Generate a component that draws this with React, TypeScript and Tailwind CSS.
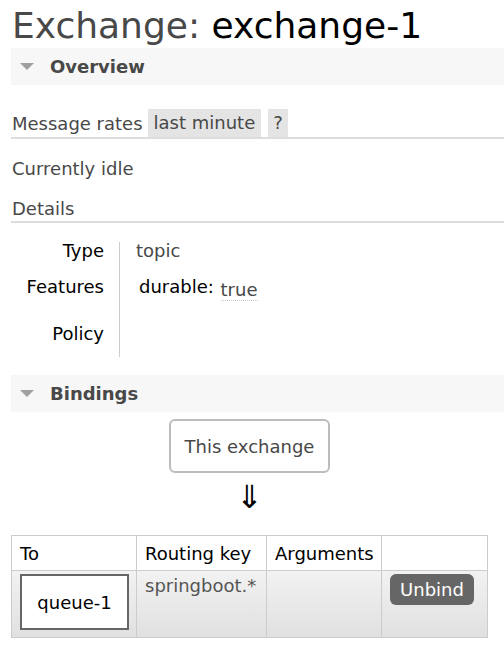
import React from 'react';

const SectionBar = ({ title }: { title: string }) => (
  <div className="flex items-center h-[37px] bg-[#f7f7f7]">
    <span className="ml-[9px] w-0 h-0 border-l-[7px] border-r-[7px] border-t-[7px] border-l-transparent border-r-transparent border-t-[#a0a0a0]" />
    <span className="ml-[16px] text-[18px] font-bold text-[#484848]">{title}</span>
  </div>
);

export default function App() {
  return (
    <div className="min-h-[658px] bg-white pl-[11px] font-['DejaVu_Sans','Verdana',sans-serif] text-[18px] leading-[21px] text-[#484848]">
      <h1 className="pt-[8px] pl-px text-[36px] leading-[36px] text-[#484848]">
        Exchange: <span className="text-black">exchange-1</span>
      </h1>

      <div className="mt-[4px]">
        <SectionBar title="Overview" />
      </div>

      <div className="mt-[24px] flex items-end border-b-2 border-[#dddddd]">
        <span className="pl-px pb-[3px]">Message rates</span>
        <span className="ml-[5px] bg-[#e4e4e4] px-[6px] h-[28px] leading-[28px]">last minute</span>
        <span className="ml-[7px] bg-[#e4e4e4] px-[5px] h-[28px] leading-[28px]">?</span>
      </div>

      <div className="mt-[19px] pl-px">Currently idle</div>

      <div className="mt-[19px] pl-px pb-[2px] border-b-2 border-[#dddddd]">Details</div>

      <div className="mt-[17px] flex">
        <div className="w-[93px] text-right text-black">
          <div className="h-[36px]">Type</div>
          <div className="h-[47px]">Features</div>
          <div>Policy</div>
        </div>
        <div className="ml-[15px] mt-[2px] h-[115px] border-l border-[#cccccc] pl-[16px]">
          <div className="-mt-[2px] h-[36px]">topic</div>
          <div className="h-[47px]">
            <span className="ml-[3px] text-black">durable: </span>
            <span className="relative top-[3px] ml-px border-b border-dotted border-[#c8c8c8]">true</span>
          </div>
        </div>
      </div>

      <div className="mt-[18px]">
        <SectionBar title="Bindings" />
      </div>

      <div className="w-[477px] flex flex-col items-center">
        <div className="mt-[7px] w-[161px] h-[54px] flex items-center justify-center border-2 border-[#bcbcbc] rounded-[6px]">
          This exchange
        </div>
        <div className="mt-[8px] h-[32px] text-[32px] leading-[32px] text-black">⇓</div>
      </div>

      <table className="mt-[22px] w-[477px] table-fixed border-collapse border border-[#cccccc] text-black">
        <thead>
          <tr className="h-[35px]">
            <th className="w-[125px] border border-[#cccccc] px-[8px] text-left font-normal">To</th>
            <th className="w-[130px] border border-[#cccccc] px-[8px] text-left font-normal">Routing key</th>
            <th className="w-[115px] border border-[#cccccc] px-[8px] text-left font-normal">Arguments</th>
            <th className="border border-[#cccccc]" />
          </tr>
        </thead>
        <tbody>
          <tr className="h-[67px] bg-gradient-to-b from-[#f2f2f2] to-[#e0e0e0]">
            <td className="border border-[#cccccc] px-[8px] pt-[3px] align-top">
              <div className="w-[109px] h-[56px] flex items-center justify-center border-2 border-[#666666] bg-white">
                queue-1
              </div>
            </td>
            <td className="border border-[#cccccc] px-[8px] pt-[4px] align-top text-[#555555]">springboot.*</td>
            <td className="border border-[#cccccc]" />
            <td className="border border-[#cccccc] px-[8px] pt-[3px] align-top">
              <button className="w-[84px] h-[31px] rounded-[6px] bg-[#666666] text-[18px] text-white">Unbind</button>
            </td>
          </tr>
        </tbody>
      </table>
    </div>
  );
}
